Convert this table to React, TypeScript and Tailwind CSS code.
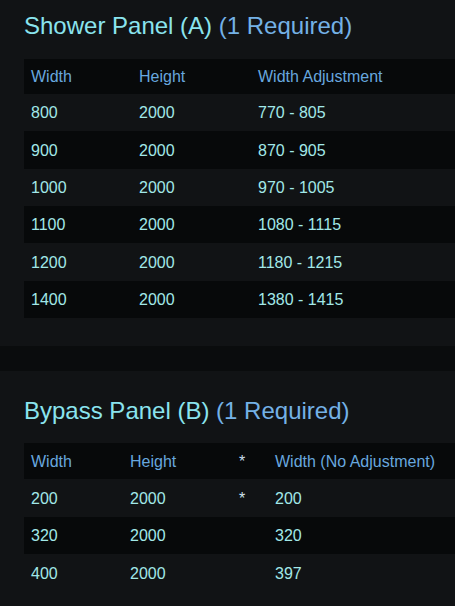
import React from "react"

type Row = string[]

interface PanelProps {
    name: string
    cols: number[]
    head: string[]
    rows: Row[]
    heights: number[]
    headH: string
    top: string
    gap: string
    bottom: string
}

const rowH: Record<number, string> = {
    37: "h-[37px]",
    38: "h-[38px]",
}

function Panel({ name, cols, head, rows, heights, headH, top, gap, bottom }: PanelProps) {
    return (
        <section className={`bg-[#111315] pl-6 overflow-hidden ${top} ${bottom}`}>
            <h2 className={`text-[24px] leading-[32px] font-normal text-[#8ae4ee] whitespace-nowrap ${gap}`}>
                {name} <span className="text-[#74b1e6]">(1 Required)</span>
            </h2>
            <table className="w-[620px] table-fixed border-collapse text-[16px]">
                <colgroup>
                    {cols.map((w, i) => (
                        <col key={i} style={{ width: w ? `${w}px` : undefined }} />
                    ))}
                </colgroup>
                <thead>
                    <tr className={`bg-[#07090a] ${headH}`}>
                        {head.map((h, i) => (
                            <th
                                key={i}
                                className={`pl-[7px] pr-2 pt-px text-left font-normal whitespace-nowrap ${h === "*" ? "text-[#c8dcea]" : "text-[#67a7df]"}`}
                            >
                                {h}
                            </th>
                        ))}
                    </tr>
                </thead>
                <tbody>
                    {rows.map((r, i) => (
                        <tr key={i} className={`${rowH[heights[i]]} ${i % 2 === 1 ? "bg-[#07090a]" : ""}`}>
                            {r.map((c, j) => (
                                <td
                                    key={j}
                                    className={`pl-[7px] pr-2 pt-px whitespace-nowrap ${c === "*" ? "text-[#d2e4ee]" : "text-[#a2e8e8]"}`}
                                >
                                    {c}
                                </td>
                            ))}
                        </tr>
                    ))}
                </tbody>
            </table>
        </section>
    )
}

export default function App() {
    return (
        <div className="w-full min-h-[606px] overflow-hidden bg-[#111315] font-['Liberation_Sans',Arial,sans-serif]">
            <Panel
                name="Shower Panel (A)"
                cols={[108, 119, 0]}
                head={["Width", "Height", "Width Adjustment"]}
                rows={[
                    ["800", "2000", "770 - 805"],
                    ["900", "2000", "870 - 905"],
                    ["1000", "2000", "970 - 1005"],
                    ["1100", "2000", "1080 - 1115"],
                    ["1200", "2000", "1180 - 1215"],
                    ["1400", "2000", "1380 - 1415"],
                ]}
                heights={[37, 38, 37, 37, 38, 37]}
                headH="h-[35px]"
                top="pt-[10px]"
                gap="mb-[17px]"
                bottom="pb-[28px]"
            />

            {/* gap between the two cards */}
            <div className="h-[25px] bg-[#0a0c0d]" />

            <Panel
                name="Bypass Panel (B)"
                cols={[99, 109, 36, 0]}
                head={["Width", "Height", "*", "Width (No Adjustment)"]}
                rows={[
                    ["200", "2000", "*", "200"],
                    ["320", "2000", "", "320"],
                    ["400", "2000", "", "397"],
                ]}
                heights={[38, 37, 38]}
                headH="h-[36px]"
                top="pt-[24px]"
                gap="mb-[16px]"
                bottom="pb-[14px]"
            />
        </div>
    )
}
